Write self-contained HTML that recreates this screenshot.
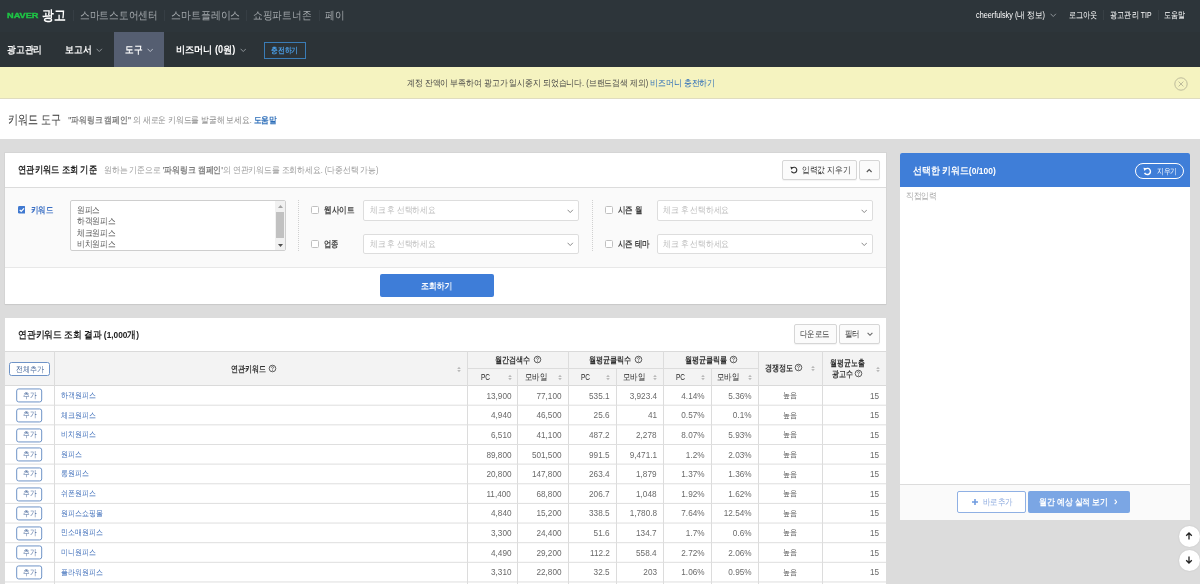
<!DOCTYPE html><html lang="ko"><head><meta charset="utf-8"><title>키워드 도구</title><style>
*{box-sizing:border-box;margin:0;padding:0}
html,body{width:1200px;height:584px;overflow:hidden}
body{position:relative;background:#dcdcdc;font-family:"Liberation Sans",sans-serif;font-size:9px;color:#333}
.a{position:absolute}
.t{position:absolute;white-space:nowrap;line-height:14px;height:14px}
b,.b{font-weight:bold}
.btn{position:absolute;border:1px solid #d6d6d6;background:#fbfbfb;border-radius:2px;box-shadow:0 1px 1px rgba(0,0,0,.05)}
.sel{position:absolute;border:1px solid #ddd;background:#fff;border-radius:2px;height:20px}
.cb{position:absolute;width:8px;height:8px;border:1px solid #c0c0c0;background:#fff;border-radius:1.5px}
.vl{position:absolute;width:1px;background:#dcdcdc}
.hl{position:absolute;height:1px;background:#dcdcdc}
.add{position:absolute;left:16px;width:26px;height:14px;transform:translate(0.2px,0.45px);border:1px solid #6e93c7;border-radius:2.5px;background:#fff}
.si{position:absolute;width:4px;height:7px}
</style></head><body><div id="root" style="position:absolute;left:0;top:0;width:1200px;height:584px;will-change:transform;filter:blur(0.35px)">
<div class="a" style="left:-8px;top:-8px;width:1216px;height:40px;background:#2d353a"></div>
<div class="a" style="left:-8px;top:32px;width:1216px;height:35px;background:#2c3337"></div>
<div class="a" style="left:113.5px;top:32px;width:50.5px;height:35px;background:#555e71"></div>
<div class="t" style="top:9.40px;font-size:8px;color:#1ec545;font-weight:bold;left:6.50px;transform-origin:0 50%;transform:scaleX(1.149);font-weight:bold;-webkit-text-stroke:0.4px #1ec545;">NAVER</div>
<div class="t" style="top:8.60px;font-size:13.5px;color:#fff;font-weight:bold;left:42.00px;transform-origin:0 50%;transform:scaleX(0.843);">광고</div>
<div class="vl" style="left:72.8px;top:10px;height:11px;background:#363e44"></div>
<div class="vl" style="left:164.3px;top:10px;height:11px;background:#363e44"></div>
<div class="vl" style="left:245.5px;top:10px;height:11px;background:#363e44"></div>
<div class="vl" style="left:319.0px;top:10px;height:11px;background:#363e44"></div>
<div class="t" style="top:8.00px;font-size:10.5px;color:#a4a9ad;left:79.60px;transform-origin:0 50%;transform:scaleX(0.882);">스마트스토어센터</div>
<div class="t" style="top:8.00px;font-size:10.5px;color:#a4a9ad;left:170.50px;transform-origin:0 50%;transform:scaleX(0.901);">스마트플레이스</div>
<div class="t" style="top:8.00px;font-size:10.5px;color:#a4a9ad;left:252.70px;transform-origin:0 50%;transform:scaleX(0.883);">쇼핑파트너존</div>
<div class="t" style="top:8.00px;font-size:10.5px;color:#a4a9ad;left:325.00px;transform-origin:0 50%;transform:scaleX(0.877);">페이</div>
<div class="t" style="top:8.00px;font-size:8.5px;color:#fff;left:976.00px;transform-origin:0 50%;transform:scaleX(0.858);">cheerfulsky (내 정보)</div>
<svg class="a" style="left:1050.25px;top:13.4125px" width="6.5" height="4.575" viewBox="0 0 6.5 4.575"><path d="M0.6 0.8 L3.25 3.575 L5.9 0.8" fill="none" stroke="#8d9397" stroke-width="1"/></svg>
<div class="t" style="top:8.00px;font-size:8.5px;color:#fff;left:1069.00px;transform-origin:0 50%;transform:scaleX(0.792);">로그아웃</div>
<div class="vl" style="left:1103.0px;top:10px;height:10px;background:#384045"></div>
<div class="vl" style="left:1157.5px;top:10px;height:10px;background:#384045"></div>
<div class="t" style="top:8.00px;font-size:8.5px;color:#fff;left:1110.00px;transform-origin:0 50%;transform:scaleX(0.804);">광고관리 TIP</div>
<div class="t" style="top:8.00px;font-size:8.5px;color:#fff;left:1164.00px;transform-origin:0 50%;transform:scaleX(0.778);">도움말</div>
<div class="t" style="top:43.00px;font-size:10px;color:#fff;font-weight:bold;left:6.50px;transform-origin:0 50%;transform:scaleX(0.875);">광고관리</div>
<div class="t" style="top:43.00px;font-size:10px;color:#fff;font-weight:bold;left:64.70px;transform-origin:0 50%;transform:scaleX(0.887);">보고서</div>
<svg class="a" style="left:96.05px;top:48.4125px" width="6.5" height="4.575" viewBox="0 0 6.5 4.575"><path d="M0.6 0.8 L3.25 3.575 L5.9 0.8" fill="none" stroke="#8d9397" stroke-width="1"/></svg>
<div class="t" style="top:43.00px;font-size:10px;color:#fff;font-weight:bold;left:124.70px;transform-origin:0 50%;transform:scaleX(0.865);">도구</div>
<svg class="a" style="left:146.75px;top:48.4125px" width="6.5" height="4.575" viewBox="0 0 6.5 4.575"><path d="M0.6 0.8 L3.25 3.575 L5.9 0.8" fill="none" stroke="#b9bfc9" stroke-width="1"/></svg>
<div class="t" style="top:43.00px;font-size:10px;color:#fff;font-weight:bold;left:175.70px;transform-origin:0 50%;transform:scaleX(0.912);">비즈머니 (0원)</div>
<svg class="a" style="left:239.75px;top:48.4125px" width="6.5" height="4.575" viewBox="0 0 6.5 4.575"><path d="M0.6 0.8 L3.25 3.575 L5.9 0.8" fill="none" stroke="#8d9397" stroke-width="1"/></svg>
<div class="a" style="left:264px;top:42px;width:42px;height:17px;border:1px solid #3a7cb6"></div>
<div class="t" style="top:43.50px;font-size:8px;color:#4a9be0;font-weight:bold;left:271.20px;transform-origin:0 50%;transform:scaleX(0.844);">충전하기</div>
<div class="a" style="left:-8px;top:67px;width:1216px;height:32px;background:#f5f3c0;border-bottom:1px solid #dfdcc0"></div>
<div class="t" style="top:76.00px;font-size:8.5px;color:#444;left:407.00px;transform-origin:0 50%;transform:scaleX(0.872);">계정 잔액이 부족하여 광고가 일시중지 되었습니다. (브랜드검색 제외) <span style="color:#2a6cb8">비즈머니 충전하기</span></div>
<svg class="a" style="left:1174px;top:76.5px" width="14" height="14" viewBox="0 0 14 14"><circle cx="7" cy="7" r="6.2" fill="none" stroke="#bdbb9b" stroke-width="1"/><path d="M4.6 4.6 L9.4 9.4 M9.4 4.6 L4.6 9.4" stroke="#bdbb9b" stroke-width="1"/></svg>
<div class="a" style="left:-8px;top:99px;width:1216px;height:40px;background:#fff"></div>
<div class="t" style="top:112.50px;font-size:13px;color:#333;left:8.00px;transform-origin:0 50%;transform:scaleX(0.772);">키워드 도구</div>
<div class="t" style="top:113.00px;font-size:8.5px;color:#888;left:68.00px;transform-origin:0 50%;transform:scaleX(0.860);"><b style="color:#7a7a7a">"파워링크 캠페인"</b> 의 새로운 키워드를 발굴해 보세요. <b style="color:#2a6cb8">도움말</b></div>
<div class="a" style="left:5px;top:153px;width:881px;height:151px;background:#fff;box-shadow:0 0 0 1px rgba(0,0,0,.03),0 1px 1px rgba(0,0,0,.05)"></div>
<div class="a" style="left:5px;top:187px;width:881px;height:81px;background:#fafafa;border-top:1px solid #dcdcdc;border-bottom:1px solid #e8e8e8"></div>
<div class="t" style="top:163.00px;font-size:9.5px;color:#222;font-weight:bold;left:18.00px;transform-origin:0 50%;transform:scaleX(0.829);">연관키워드 조회 기준</div>
<div class="t" style="top:163.00px;font-size:8.5px;color:#999;left:104.30px;transform-origin:0 50%;transform:scaleX(0.867);">원하는 기준으로 <b style="color:#7a7a7a">'파워링크 캠페인'</b>의 연관키워드를 조회하세요. (다중선택 가능)</div>
<div class="btn" style="left:782px;top:160px;width:75px;height:20px"></div>
<svg class="a" style="left:789.7px;top:165.6px" width="8.2" height="8.2" viewBox="0 0 9 9"><path d="M2.6 1.9 A3.1 3.1 0 1 1 1.6 5.9" fill="none" stroke="#333" stroke-width="1.25"/><path d="M0.4 0.8 L3.9 1.3 L1.5 4.0 Z" fill="#333"/></svg>
<div class="t" style="top:163.00px;font-size:8.5px;color:#333;left:802.00px;transform-origin:0 50%;transform:scaleX(0.860);">입력값 지우기</div>
<div class="btn" style="left:859px;top:160px;width:21px;height:20px"></div>
<svg class="a" style="left:866.3px;top:167.7px" width="6.4" height="5" viewBox="0 0 6.4 5"><path d="M0.8 4.0 L3.2 1.5 L5.6 4.0" fill="none" stroke="#555" stroke-width="1.15"/></svg>
<svg class="a" style="left:17.7px;top:206.3px" width="7.6" height="7.6" viewBox="0 0 8.5 8.5"><rect width="8.5" height="8.5" rx="1.6" fill="#3f78d0"/><path d="M1.9 4.3 L3.6 6 L6.7 2.6" fill="none" stroke="#fff" stroke-width="1.4"/></svg>
<div class="t" style="top:203.00px;font-size:9px;color:#3a6fc4;font-weight:bold;left:30.50px;transform-origin:0 50%;transform:scaleX(0.833);">키워드</div>
<div class="a" style="left:69.5px;top:200px;width:216px;height:51px;background:#fff;border:1px solid #cecece;border-radius:2px"></div>
<div class="t" style="top:202.70px;font-size:8.8px;color:#555;left:77.00px;transform-origin:0 50%;transform:scaleX(0.852);">원피스</div>
<div class="t" style="top:214.10px;font-size:8.8px;color:#555;left:77.00px;transform-origin:0 50%;transform:scaleX(0.856);">하객원피스</div>
<div class="t" style="top:225.50px;font-size:8.8px;color:#555;left:77.00px;transform-origin:0 50%;transform:scaleX(0.856);">체크원피스</div>
<div class="t" style="top:236.90px;font-size:8.8px;color:#555;left:77.00px;transform-origin:0 50%;transform:scaleX(0.856);">비치원피스</div>
<div class="a" style="left:275px;top:201px;width:10px;height:49px;background:#f1f1f1"></div>
<div class="a" style="left:276px;top:212px;width:8px;height:25.5px;background:#c1c1c1"></div>
<svg class="a" style="left:277.5px;top:205px" width="5" height="3" viewBox="0 0 5 3"><path d="M0 3 L2.5 0 L5 3 Z" fill="#a3a3a3"/></svg>
<svg class="a" style="left:277.5px;top:243.5px" width="5" height="3" viewBox="0 0 5 3"><path d="M0 0 L2.5 3 L5 0 Z" fill="#505050"/></svg>
<div class="a" style="left:297.5px;top:200px;width:0;height:51px;border-left:1px dotted #d0d0d0"></div>
<div class="a" style="left:592px;top:200px;width:0;height:51px;border-left:1px dotted #d0d0d0"></div>
<div class="cb" style="left:311px;top:206px"></div>
<div class="t" style="top:202.80px;font-size:8.8px;color:#444;font-weight:bold;left:324.00px;transform-origin:0 50%;transform:scaleX(0.847);">웹사이트</div>
<div class="sel" style="left:363px;top:200px;width:216px;height:21px"></div>
<div class="t" style="top:203.40px;font-size:8.5px;color:#bdbdbd;left:369.50px;transform-origin:0 50%;transform:scaleX(0.854);">체크 후 선택하세요</div>
<svg class="a" style="left:567.45px;top:208.5125px" width="6.5" height="4.575" viewBox="0 0 6.5 4.575"><path d="M0.6 0.8 L3.25 3.575 L5.9 0.8" fill="none" stroke="#858585" stroke-width="0.95"/></svg>
<div class="cb" style="left:311px;top:239.5px"></div>
<div class="t" style="top:236.50px;font-size:8.8px;color:#444;font-weight:bold;left:324.00px;transform-origin:0 50%;transform:scaleX(0.819);">업종</div>
<div class="sel" style="left:363px;top:234px;width:216px;height:20px"></div>
<div class="t" style="top:236.90px;font-size:8.5px;color:#bdbdbd;left:369.50px;transform-origin:0 50%;transform:scaleX(0.854);">체크 후 선택하세요</div>
<svg class="a" style="left:567.45px;top:242.0125px" width="6.5" height="4.575" viewBox="0 0 6.5 4.575"><path d="M0.6 0.8 L3.25 3.575 L5.9 0.8" fill="none" stroke="#858585" stroke-width="0.95"/></svg>
<div class="cb" style="left:605px;top:206px"></div>
<div class="t" style="top:202.80px;font-size:8.8px;color:#444;font-weight:bold;left:618.00px;transform-origin:0 50%;transform:scaleX(0.832);">시즌 월</div>
<div class="sel" style="left:657px;top:200px;width:215.5px;height:21px"></div>
<div class="t" style="top:203.40px;font-size:8.5px;color:#bdbdbd;left:662.50px;transform-origin:0 50%;transform:scaleX(0.860);">체크 후 선택하세요</div>
<svg class="a" style="left:860.95px;top:208.5125px" width="6.5" height="4.575" viewBox="0 0 6.5 4.575"><path d="M0.6 0.8 L3.25 3.575 L5.9 0.8" fill="none" stroke="#858585" stroke-width="0.95"/></svg>
<div class="cb" style="left:605px;top:239.5px"></div>
<div class="t" style="top:236.50px;font-size:8.8px;color:#444;font-weight:bold;left:618.00px;transform-origin:0 50%;transform:scaleX(0.832);">시즌 테마</div>
<div class="sel" style="left:657px;top:234px;width:215.5px;height:20px"></div>
<div class="t" style="top:236.90px;font-size:8.5px;color:#bdbdbd;left:662.50px;transform-origin:0 50%;transform:scaleX(0.860);">체크 후 선택하세요</div>
<svg class="a" style="left:860.95px;top:242.0125px" width="6.5" height="4.575" viewBox="0 0 6.5 4.575"><path d="M0.6 0.8 L3.25 3.575 L5.9 0.8" fill="none" stroke="#858585" stroke-width="0.95"/></svg>
<div class="a" style="left:379.5px;top:274px;width:114px;height:23px;background:#3e7dd8;border-radius:2px"></div>
<div class="t" style="top:278.70px;font-size:8.8px;color:#fff;font-weight:bold;left:420.75px;transform-origin:0 50%;transform:scaleX(0.868);">조회하기</div>
<div class="a" style="left:5px;top:317.5px;width:881px;height:270px;background:#fff"></div>
<div class="t" style="top:327.50px;font-size:9.5px;color:#222;font-weight:bold;left:18.00px;transform-origin:0 50%;transform:scaleX(0.877);">연관키워드 조회 결과 (1,000개)</div>
<div class="btn" style="left:794px;top:324px;width:42.5px;height:20px"></div>
<div class="t" style="top:327.00px;font-size:8.5px;color:#333;left:800.00px;transform-origin:0 50%;transform:scaleX(0.833);">다운로드</div>
<div class="btn" style="left:839px;top:324px;width:40.5px;height:20px"></div>
<div class="t" style="top:327.00px;font-size:8.5px;color:#333;left:844.50px;transform-origin:0 50%;transform:scaleX(0.833);">필터</div>
<svg class="a" style="left:866.5px;top:332.35px" width="6" height="4.300000000000001" viewBox="0 0 6 4.300000000000001"><path d="M0.6 0.8 L3.0 3.3000000000000003 L5.4 0.8" fill="none" stroke="#666" stroke-width="1.1"/></svg>
<div class="a" style="left:5px;top:351px;width:881px;height:35px;background:#f3f3f3;border-top:1px solid #dadada;border-bottom:1px solid #dadada"></div>
<div class="vl" style="left:54px;top:351px;height:240px"></div>
<div class="vl" style="left:467px;top:351px;height:240px"></div>
<div class="vl" style="left:517px;top:368px;height:240px"></div>
<div class="vl" style="left:568px;top:351px;height:240px"></div>
<div class="vl" style="left:616px;top:368px;height:240px"></div>
<div class="vl" style="left:663px;top:351px;height:240px"></div>
<div class="vl" style="left:711px;top:368px;height:240px"></div>
<div class="vl" style="left:758px;top:351px;height:240px"></div>
<div class="vl" style="left:822px;top:351px;height:240px"></div>
<div class="hl" style="left:467px;top:368px;width:291px"></div>
<div class="a" style="left:9px;top:362px;width:41px;height:14px;border:1px solid #6e93c7;border-radius:2.5px;background:#fff"></div>
<div class="t" style="top:362.80px;font-size:8.2px;color:#4c6c9e;left:15.50px;transform-origin:0 50%;transform:scaleX(0.875);">전체추가</div>
<div class="t" style="top:361.70px;font-size:8.5px;color:#333;font-weight:bold;left:230.50px;transform-origin:0 50%;transform:scaleX(0.778);">연관키워드</div>
<svg class="a" style="left:268.0px;top:363.8px" width="9" height="9" viewBox="0 0 9 9"><circle cx="4.5" cy="4.5" r="3.3" fill="none" stroke="#444" stroke-width="0.85"/><path d="M3.4 3.7 Q3.4 2.6 4.5 2.6 Q5.6 2.6 5.6 3.5 Q5.6 4.1 4.5 4.7 V5.3" fill="none" stroke="#444" stroke-width="0.75"/><rect x="4.1" y="5.9" width="0.8" height="0.8" fill="#444"/></svg>
<svg class="si" style="left:456.8px;top:365.5px" viewBox="0 0 4 7"><path d="M2 0.7 L3.8 2.9 H0.2 Z M2 6.3 L3.8 4.1 H0.2 Z" fill="#b9b9b9"/></svg>
<div class="t" style="top:353.30px;font-size:8.5px;color:#333;font-weight:bold;left:494.50px;transform-origin:0 50%;transform:scaleX(0.789);">월간검색수</div>
<svg class="a" style="left:532.6px;top:355.1px" width="9" height="9" viewBox="0 0 9 9"><circle cx="4.5" cy="4.5" r="3.3" fill="none" stroke="#444" stroke-width="0.85"/><path d="M3.4 3.7 Q3.4 2.6 4.5 2.6 Q5.6 2.6 5.6 3.5 Q5.6 4.1 4.5 4.7 V5.3" fill="none" stroke="#444" stroke-width="0.75"/><rect x="4.1" y="5.9" width="0.8" height="0.8" fill="#444"/></svg>
<div class="t" style="top:353.30px;font-size:8.5px;color:#333;font-weight:bold;left:589.00px;transform-origin:0 50%;transform:scaleX(0.787);">월평균클릭수</div>
<svg class="a" style="left:634.0px;top:355.1px" width="9" height="9" viewBox="0 0 9 9"><circle cx="4.5" cy="4.5" r="3.3" fill="none" stroke="#444" stroke-width="0.85"/><path d="M3.4 3.7 Q3.4 2.6 4.5 2.6 Q5.6 2.6 5.6 3.5 Q5.6 4.1 4.5 4.7 V5.3" fill="none" stroke="#444" stroke-width="0.75"/><rect x="4.1" y="5.9" width="0.8" height="0.8" fill="#444"/></svg>
<div class="t" style="top:353.30px;font-size:8.5px;color:#333;font-weight:bold;left:684.50px;transform-origin:0 50%;transform:scaleX(0.787);">월평균클릭률</div>
<svg class="a" style="left:729.0px;top:355.1px" width="9" height="9" viewBox="0 0 9 9"><circle cx="4.5" cy="4.5" r="3.3" fill="none" stroke="#444" stroke-width="0.85"/><path d="M3.4 3.7 Q3.4 2.6 4.5 2.6 Q5.6 2.6 5.6 3.5 Q5.6 4.1 4.5 4.7 V5.3" fill="none" stroke="#444" stroke-width="0.75"/><rect x="4.1" y="5.9" width="0.8" height="0.8" fill="#444"/></svg>
<div class="t" style="top:370.30px;font-size:8.8px;color:#222;left:481.20px;transform-origin:0 50%;transform:scaleX(0.736);">PC</div>
<svg class="si" style="left:507.5px;top:374.2px" viewBox="0 0 4 7"><path d="M2 0.7 L3.8 2.9 H0.2 Z M2 6.3 L3.8 4.1 H0.2 Z" fill="#b9b9b9"/></svg>
<div class="t" style="top:370.30px;font-size:8.5px;color:#222;left:525.00px;transform-origin:0 50%;transform:scaleX(0.833);">모바일</div>
<svg class="si" style="left:558.2px;top:374.2px" viewBox="0 0 4 7"><path d="M2 0.7 L3.8 2.9 H0.2 Z M2 6.3 L3.8 4.1 H0.2 Z" fill="#b9b9b9"/></svg>
<div class="t" style="top:370.30px;font-size:8.8px;color:#222;left:580.50px;transform-origin:0 50%;transform:scaleX(0.736);">PC</div>
<svg class="si" style="left:605.5px;top:374.2px" viewBox="0 0 4 7"><path d="M2 0.7 L3.8 2.9 H0.2 Z M2 6.3 L3.8 4.1 H0.2 Z" fill="#b9b9b9"/></svg>
<div class="t" style="top:370.30px;font-size:8.5px;color:#222;left:622.50px;transform-origin:0 50%;transform:scaleX(0.833);">모바일</div>
<svg class="si" style="left:653px;top:374.2px" viewBox="0 0 4 7"><path d="M2 0.7 L3.8 2.9 H0.2 Z M2 6.3 L3.8 4.1 H0.2 Z" fill="#b9b9b9"/></svg>
<div class="t" style="top:370.30px;font-size:8.8px;color:#222;left:675.50px;transform-origin:0 50%;transform:scaleX(0.736);">PC</div>
<svg class="si" style="left:700.5px;top:374.2px" viewBox="0 0 4 7"><path d="M2 0.7 L3.8 2.9 H0.2 Z M2 6.3 L3.8 4.1 H0.2 Z" fill="#b9b9b9"/></svg>
<div class="t" style="top:370.30px;font-size:8.5px;color:#222;left:717.00px;transform-origin:0 50%;transform:scaleX(0.833);">모바일</div>
<svg class="si" style="left:748px;top:374.2px" viewBox="0 0 4 7"><path d="M2 0.7 L3.8 2.9 H0.2 Z M2 6.3 L3.8 4.1 H0.2 Z" fill="#b9b9b9"/></svg>
<div class="t" style="top:361.30px;font-size:8.5px;color:#333;font-weight:bold;left:764.50px;transform-origin:0 50%;transform:scaleX(0.792);">경쟁정도</div>
<svg class="a" style="left:794.0px;top:363.0px" width="9" height="9" viewBox="0 0 9 9"><circle cx="4.5" cy="4.5" r="3.3" fill="none" stroke="#444" stroke-width="0.85"/><path d="M3.4 3.7 Q3.4 2.6 4.5 2.6 Q5.6 2.6 5.6 3.5 Q5.6 4.1 4.5 4.7 V5.3" fill="none" stroke="#444" stroke-width="0.75"/><rect x="4.1" y="5.9" width="0.8" height="0.8" fill="#444"/></svg>
<svg class="si" style="left:811.3px;top:365.0px" viewBox="0 0 4 7"><path d="M2 0.7 L3.8 2.9 H0.2 Z M2 6.3 L3.8 4.1 H0.2 Z" fill="#b9b9b9"/></svg>
<div class="t" style="top:355.80px;font-size:8.5px;color:#333;font-weight:bold;left:830.00px;transform-origin:0 50%;transform:scaleX(0.767);">월평균노출</div>
<div class="t" style="top:367.30px;font-size:8.5px;color:#333;font-weight:bold;left:831.50px;transform-origin:0 50%;transform:scaleX(0.778);">광고수</div>
<svg class="a" style="left:854.0px;top:369.3px" width="9" height="9" viewBox="0 0 9 9"><circle cx="4.5" cy="4.5" r="3.3" fill="none" stroke="#444" stroke-width="0.85"/><path d="M3.4 3.7 Q3.4 2.6 4.5 2.6 Q5.6 2.6 5.6 3.5 Q5.6 4.1 4.5 4.7 V5.3" fill="none" stroke="#444" stroke-width="0.75"/><rect x="4.1" y="5.9" width="0.8" height="0.8" fill="#444"/></svg>
<svg class="si" style="left:875.5px;top:365.5px" viewBox="0 0 4 7"><path d="M2 0.7 L3.8 2.9 H0.2 Z M2 6.3 L3.8 4.1 H0.2 Z" fill="#b9b9b9"/></svg>
<div class="hl" style="left:5px;top:404px;width:881px;background:rgba(222,222,222,0.30)"></div><div class="hl" style="left:5px;top:405px;width:881px;background:rgba(222,222,222,0.70)"></div>
<div class="add" style="top:388px"></div>
<div class="t" style="top:388.78px;font-size:8.2px;color:#4c6c9e;left:22.50px;transform-origin:0 50%;transform:scaleX(0.828);">추가</div>
<div class="t" style="top:387.88px;font-size:8.3px;color:#4674bd;left:60.75px;transform-origin:0 50%;transform:scaleX(0.869);">하객원피스</div>
<div class="t" style="top:388.58px;font-size:9px;color:#6a6a6a;right:688.70px;transform-origin:100% 50%;transform:scaleX(0.910);">13,900</div>
<div class="t" style="top:388.58px;font-size:9px;color:#6a6a6a;right:638.00px;transform-origin:100% 50%;transform:scaleX(0.910);">77,100</div>
<div class="t" style="top:388.58px;font-size:9px;color:#6a6a6a;right:590.30px;transform-origin:100% 50%;transform:scaleX(0.910);">535.1</div>
<div class="t" style="top:388.58px;font-size:9px;color:#6a6a6a;right:543.30px;transform-origin:100% 50%;transform:scaleX(0.910);">3,923.4</div>
<div class="t" style="top:388.58px;font-size:9px;color:#6a6a6a;right:495.30px;transform-origin:100% 50%;transform:scaleX(0.910);">4.14%</div>
<div class="t" style="top:388.58px;font-size:9px;color:#6a6a6a;right:448.30px;transform-origin:100% 50%;transform:scaleX(0.910);">5.36%</div>
<div class="t" style="top:387.98px;font-size:8.3px;color:#555;left:640.00px;width:300px;text-align:center;transform-origin:50% 50%;transform:scaleX(0.875);">높음</div>
<div class="t" style="top:388.58px;font-size:9px;color:#6a6a6a;right:320.50px;transform-origin:100% 50%;transform:scaleX(0.910);">15</div>
<div class="hl" style="left:5px;top:424px;width:881px;background:rgba(222,222,222,0.66)"></div><div class="hl" style="left:5px;top:425px;width:881px;background:rgba(222,222,222,0.34)"></div>
<div class="add" style="top:408px"></div>
<div class="t" style="top:408.42px;font-size:8.2px;color:#4c6c9e;left:22.50px;transform-origin:0 50%;transform:scaleX(0.828);">추가</div>
<div class="t" style="top:407.52px;font-size:8.3px;color:#4674bd;left:60.75px;transform-origin:0 50%;transform:scaleX(0.869);">체크원피스</div>
<div class="t" style="top:408.22px;font-size:9px;color:#6a6a6a;right:688.70px;transform-origin:100% 50%;transform:scaleX(0.910);">4,940</div>
<div class="t" style="top:408.22px;font-size:9px;color:#6a6a6a;right:638.00px;transform-origin:100% 50%;transform:scaleX(0.910);">46,500</div>
<div class="t" style="top:408.22px;font-size:9px;color:#6a6a6a;right:590.30px;transform-origin:100% 50%;transform:scaleX(0.910);">25.6</div>
<div class="t" style="top:408.22px;font-size:9px;color:#6a6a6a;right:543.30px;transform-origin:100% 50%;transform:scaleX(0.910);">41</div>
<div class="t" style="top:408.22px;font-size:9px;color:#6a6a6a;right:495.30px;transform-origin:100% 50%;transform:scaleX(0.910);">0.57%</div>
<div class="t" style="top:408.22px;font-size:9px;color:#6a6a6a;right:448.30px;transform-origin:100% 50%;transform:scaleX(0.910);">0.1%</div>
<div class="t" style="top:407.62px;font-size:8.3px;color:#555;left:640.00px;width:300px;text-align:center;transform-origin:50% 50%;transform:scaleX(0.875);">높음</div>
<div class="t" style="top:408.22px;font-size:9px;color:#6a6a6a;right:320.50px;transform-origin:100% 50%;transform:scaleX(0.910);">15</div>
<div class="hl" style="left:5px;top:444px;width:881px;background:rgba(222,222,222,0.98)"></div>
<div class="add" style="top:428px"></div>
<div class="t" style="top:428.06px;font-size:8.2px;color:#4c6c9e;left:22.50px;transform-origin:0 50%;transform:scaleX(0.828);">추가</div>
<div class="t" style="top:427.16px;font-size:8.3px;color:#4674bd;left:60.75px;transform-origin:0 50%;transform:scaleX(0.869);">비치원피스</div>
<div class="t" style="top:427.86px;font-size:9px;color:#6a6a6a;right:688.70px;transform-origin:100% 50%;transform:scaleX(0.910);">6,510</div>
<div class="t" style="top:427.86px;font-size:9px;color:#6a6a6a;right:638.00px;transform-origin:100% 50%;transform:scaleX(0.910);">41,100</div>
<div class="t" style="top:427.86px;font-size:9px;color:#6a6a6a;right:590.30px;transform-origin:100% 50%;transform:scaleX(0.910);">487.2</div>
<div class="t" style="top:427.86px;font-size:9px;color:#6a6a6a;right:543.30px;transform-origin:100% 50%;transform:scaleX(0.910);">2,278</div>
<div class="t" style="top:427.86px;font-size:9px;color:#6a6a6a;right:495.30px;transform-origin:100% 50%;transform:scaleX(0.910);">8.07%</div>
<div class="t" style="top:427.86px;font-size:9px;color:#6a6a6a;right:448.30px;transform-origin:100% 50%;transform:scaleX(0.910);">5.93%</div>
<div class="t" style="top:427.26px;font-size:8.3px;color:#555;left:640.00px;width:300px;text-align:center;transform-origin:50% 50%;transform:scaleX(0.875);">높음</div>
<div class="t" style="top:427.86px;font-size:9px;color:#6a6a6a;right:320.50px;transform-origin:100% 50%;transform:scaleX(0.910);">15</div>
<div class="hl" style="left:5px;top:463px;width:881px;background:rgba(222,222,222,0.38)"></div><div class="hl" style="left:5px;top:464px;width:881px;background:rgba(222,222,222,0.62)"></div>
<div class="add" style="top:447px"></div>
<div class="t" style="top:447.70px;font-size:8.2px;color:#4c6c9e;left:22.50px;transform-origin:0 50%;transform:scaleX(0.828);">추가</div>
<div class="t" style="top:446.80px;font-size:8.3px;color:#4674bd;left:60.75px;transform-origin:0 50%;transform:scaleX(0.869);">원피스</div>
<div class="t" style="top:447.50px;font-size:9px;color:#6a6a6a;right:688.70px;transform-origin:100% 50%;transform:scaleX(0.910);">89,800</div>
<div class="t" style="top:447.50px;font-size:9px;color:#6a6a6a;right:638.00px;transform-origin:100% 50%;transform:scaleX(0.910);">501,500</div>
<div class="t" style="top:447.50px;font-size:9px;color:#6a6a6a;right:590.30px;transform-origin:100% 50%;transform:scaleX(0.910);">991.5</div>
<div class="t" style="top:447.50px;font-size:9px;color:#6a6a6a;right:543.30px;transform-origin:100% 50%;transform:scaleX(0.910);">9,471.1</div>
<div class="t" style="top:447.50px;font-size:9px;color:#6a6a6a;right:495.30px;transform-origin:100% 50%;transform:scaleX(0.910);">1.2%</div>
<div class="t" style="top:447.50px;font-size:9px;color:#6a6a6a;right:448.30px;transform-origin:100% 50%;transform:scaleX(0.910);">2.03%</div>
<div class="t" style="top:446.90px;font-size:8.3px;color:#555;left:640.00px;width:300px;text-align:center;transform-origin:50% 50%;transform:scaleX(0.875);">높음</div>
<div class="t" style="top:447.50px;font-size:9px;color:#6a6a6a;right:320.50px;transform-origin:100% 50%;transform:scaleX(0.910);">15</div>
<div class="hl" style="left:5px;top:483px;width:881px;background:rgba(222,222,222,0.74)"></div><div class="hl" style="left:5px;top:484px;width:881px;background:rgba(222,222,222,0.26)"></div>
<div class="add" style="top:467px"></div>
<div class="t" style="top:467.34px;font-size:8.2px;color:#4c6c9e;left:22.50px;transform-origin:0 50%;transform:scaleX(0.828);">추가</div>
<div class="t" style="top:466.44px;font-size:8.3px;color:#4674bd;left:60.75px;transform-origin:0 50%;transform:scaleX(0.869);">롱원피스</div>
<div class="t" style="top:467.14px;font-size:9px;color:#6a6a6a;right:688.70px;transform-origin:100% 50%;transform:scaleX(0.910);">20,800</div>
<div class="t" style="top:467.14px;font-size:9px;color:#6a6a6a;right:638.00px;transform-origin:100% 50%;transform:scaleX(0.910);">147,800</div>
<div class="t" style="top:467.14px;font-size:9px;color:#6a6a6a;right:590.30px;transform-origin:100% 50%;transform:scaleX(0.910);">263.4</div>
<div class="t" style="top:467.14px;font-size:9px;color:#6a6a6a;right:543.30px;transform-origin:100% 50%;transform:scaleX(0.910);">1,879</div>
<div class="t" style="top:467.14px;font-size:9px;color:#6a6a6a;right:495.30px;transform-origin:100% 50%;transform:scaleX(0.910);">1.37%</div>
<div class="t" style="top:467.14px;font-size:9px;color:#6a6a6a;right:448.30px;transform-origin:100% 50%;transform:scaleX(0.910);">1.36%</div>
<div class="t" style="top:466.54px;font-size:8.3px;color:#555;left:640.00px;width:300px;text-align:center;transform-origin:50% 50%;transform:scaleX(0.875);">높음</div>
<div class="t" style="top:467.14px;font-size:9px;color:#6a6a6a;right:320.50px;transform-origin:100% 50%;transform:scaleX(0.910);">15</div>
<div class="hl" style="left:5px;top:502px;width:881px;background:rgba(222,222,222,0.10)"></div><div class="hl" style="left:5px;top:503px;width:881px;background:rgba(222,222,222,0.90)"></div>
<div class="add" style="top:487px"></div>
<div class="t" style="top:486.98px;font-size:8.2px;color:#4c6c9e;left:22.50px;transform-origin:0 50%;transform:scaleX(0.828);">추가</div>
<div class="t" style="top:486.08px;font-size:8.3px;color:#4674bd;left:60.75px;transform-origin:0 50%;transform:scaleX(0.869);">쉬폰원피스</div>
<div class="t" style="top:486.78px;font-size:9px;color:#6a6a6a;right:688.70px;transform-origin:100% 50%;transform:scaleX(0.910);">11,400</div>
<div class="t" style="top:486.78px;font-size:9px;color:#6a6a6a;right:638.00px;transform-origin:100% 50%;transform:scaleX(0.910);">68,800</div>
<div class="t" style="top:486.78px;font-size:9px;color:#6a6a6a;right:590.30px;transform-origin:100% 50%;transform:scaleX(0.910);">206.7</div>
<div class="t" style="top:486.78px;font-size:9px;color:#6a6a6a;right:543.30px;transform-origin:100% 50%;transform:scaleX(0.910);">1,048</div>
<div class="t" style="top:486.78px;font-size:9px;color:#6a6a6a;right:495.30px;transform-origin:100% 50%;transform:scaleX(0.910);">1.92%</div>
<div class="t" style="top:486.78px;font-size:9px;color:#6a6a6a;right:448.30px;transform-origin:100% 50%;transform:scaleX(0.910);">1.62%</div>
<div class="t" style="top:486.18px;font-size:8.3px;color:#555;left:640.00px;width:300px;text-align:center;transform-origin:50% 50%;transform:scaleX(0.875);">높음</div>
<div class="t" style="top:486.78px;font-size:9px;color:#6a6a6a;right:320.50px;transform-origin:100% 50%;transform:scaleX(0.910);">15</div>
<div class="hl" style="left:5px;top:522px;width:881px;background:rgba(222,222,222,0.46)"></div><div class="hl" style="left:5px;top:523px;width:881px;background:rgba(222,222,222,0.54)"></div>
<div class="add" style="top:506px"></div>
<div class="t" style="top:506.62px;font-size:8.2px;color:#4c6c9e;left:22.50px;transform-origin:0 50%;transform:scaleX(0.828);">추가</div>
<div class="t" style="top:505.72px;font-size:8.3px;color:#4674bd;left:60.75px;transform-origin:0 50%;transform:scaleX(0.869);">원피스쇼핑몰</div>
<div class="t" style="top:506.42px;font-size:9px;color:#6a6a6a;right:688.70px;transform-origin:100% 50%;transform:scaleX(0.910);">4,840</div>
<div class="t" style="top:506.42px;font-size:9px;color:#6a6a6a;right:638.00px;transform-origin:100% 50%;transform:scaleX(0.910);">15,200</div>
<div class="t" style="top:506.42px;font-size:9px;color:#6a6a6a;right:590.30px;transform-origin:100% 50%;transform:scaleX(0.910);">338.5</div>
<div class="t" style="top:506.42px;font-size:9px;color:#6a6a6a;right:543.30px;transform-origin:100% 50%;transform:scaleX(0.910);">1,780.8</div>
<div class="t" style="top:506.42px;font-size:9px;color:#6a6a6a;right:495.30px;transform-origin:100% 50%;transform:scaleX(0.910);">7.64%</div>
<div class="t" style="top:506.42px;font-size:9px;color:#6a6a6a;right:448.30px;transform-origin:100% 50%;transform:scaleX(0.910);">12.54%</div>
<div class="t" style="top:505.82px;font-size:8.3px;color:#555;left:640.00px;width:300px;text-align:center;transform-origin:50% 50%;transform:scaleX(0.875);">높음</div>
<div class="t" style="top:506.42px;font-size:9px;color:#6a6a6a;right:320.50px;transform-origin:100% 50%;transform:scaleX(0.910);">15</div>
<div class="hl" style="left:5px;top:542px;width:881px;background:rgba(222,222,222,0.82)"></div><div class="hl" style="left:5px;top:543px;width:881px;background:rgba(222,222,222,0.18)"></div>
<div class="add" style="top:526px"></div>
<div class="t" style="top:526.26px;font-size:8.2px;color:#4c6c9e;left:22.50px;transform-origin:0 50%;transform:scaleX(0.828);">추가</div>
<div class="t" style="top:525.36px;font-size:8.3px;color:#4674bd;left:60.75px;transform-origin:0 50%;transform:scaleX(0.869);">민소매원피스</div>
<div class="t" style="top:526.06px;font-size:9px;color:#6a6a6a;right:688.70px;transform-origin:100% 50%;transform:scaleX(0.910);">3,300</div>
<div class="t" style="top:526.06px;font-size:9px;color:#6a6a6a;right:638.00px;transform-origin:100% 50%;transform:scaleX(0.910);">24,400</div>
<div class="t" style="top:526.06px;font-size:9px;color:#6a6a6a;right:590.30px;transform-origin:100% 50%;transform:scaleX(0.910);">51.6</div>
<div class="t" style="top:526.06px;font-size:9px;color:#6a6a6a;right:543.30px;transform-origin:100% 50%;transform:scaleX(0.910);">134.7</div>
<div class="t" style="top:526.06px;font-size:9px;color:#6a6a6a;right:495.30px;transform-origin:100% 50%;transform:scaleX(0.910);">1.7%</div>
<div class="t" style="top:526.06px;font-size:9px;color:#6a6a6a;right:448.30px;transform-origin:100% 50%;transform:scaleX(0.910);">0.6%</div>
<div class="t" style="top:525.46px;font-size:8.3px;color:#555;left:640.00px;width:300px;text-align:center;transform-origin:50% 50%;transform:scaleX(0.875);">높음</div>
<div class="t" style="top:526.06px;font-size:9px;color:#6a6a6a;right:320.50px;transform-origin:100% 50%;transform:scaleX(0.910);">15</div>
<div class="hl" style="left:5px;top:561px;width:881px;background:rgba(222,222,222,0.18)"></div><div class="hl" style="left:5px;top:562px;width:881px;background:rgba(222,222,222,0.82)"></div>
<div class="add" style="top:545px"></div>
<div class="t" style="top:545.90px;font-size:8.2px;color:#4c6c9e;left:22.50px;transform-origin:0 50%;transform:scaleX(0.828);">추가</div>
<div class="t" style="top:545.00px;font-size:8.3px;color:#4674bd;left:60.75px;transform-origin:0 50%;transform:scaleX(0.869);">미니원피스</div>
<div class="t" style="top:545.70px;font-size:9px;color:#6a6a6a;right:688.70px;transform-origin:100% 50%;transform:scaleX(0.910);">4,490</div>
<div class="t" style="top:545.70px;font-size:9px;color:#6a6a6a;right:638.00px;transform-origin:100% 50%;transform:scaleX(0.910);">29,200</div>
<div class="t" style="top:545.70px;font-size:9px;color:#6a6a6a;right:590.30px;transform-origin:100% 50%;transform:scaleX(0.910);">112.2</div>
<div class="t" style="top:545.70px;font-size:9px;color:#6a6a6a;right:543.30px;transform-origin:100% 50%;transform:scaleX(0.910);">558.4</div>
<div class="t" style="top:545.70px;font-size:9px;color:#6a6a6a;right:495.30px;transform-origin:100% 50%;transform:scaleX(0.910);">2.72%</div>
<div class="t" style="top:545.70px;font-size:9px;color:#6a6a6a;right:448.30px;transform-origin:100% 50%;transform:scaleX(0.910);">2.06%</div>
<div class="t" style="top:545.10px;font-size:8.3px;color:#555;left:640.00px;width:300px;text-align:center;transform-origin:50% 50%;transform:scaleX(0.875);">높음</div>
<div class="t" style="top:545.70px;font-size:9px;color:#6a6a6a;right:320.50px;transform-origin:100% 50%;transform:scaleX(0.910);">15</div>
<div class="hl" style="left:5px;top:581px;width:881px;background:rgba(222,222,222,0.54)"></div><div class="hl" style="left:5px;top:582px;width:881px;background:rgba(222,222,222,0.46)"></div>
<div class="add" style="top:565px"></div>
<div class="t" style="top:565.54px;font-size:8.2px;color:#4c6c9e;left:22.50px;transform-origin:0 50%;transform:scaleX(0.828);">추가</div>
<div class="t" style="top:564.64px;font-size:8.3px;color:#4674bd;left:60.75px;transform-origin:0 50%;transform:scaleX(0.869);">플라워원피스</div>
<div class="t" style="top:565.34px;font-size:9px;color:#6a6a6a;right:688.70px;transform-origin:100% 50%;transform:scaleX(0.910);">3,310</div>
<div class="t" style="top:565.34px;font-size:9px;color:#6a6a6a;right:638.00px;transform-origin:100% 50%;transform:scaleX(0.910);">22,800</div>
<div class="t" style="top:565.34px;font-size:9px;color:#6a6a6a;right:590.30px;transform-origin:100% 50%;transform:scaleX(0.910);">32.5</div>
<div class="t" style="top:565.34px;font-size:9px;color:#6a6a6a;right:543.30px;transform-origin:100% 50%;transform:scaleX(0.910);">203</div>
<div class="t" style="top:565.34px;font-size:9px;color:#6a6a6a;right:495.30px;transform-origin:100% 50%;transform:scaleX(0.910);">1.06%</div>
<div class="t" style="top:565.34px;font-size:9px;color:#6a6a6a;right:448.30px;transform-origin:100% 50%;transform:scaleX(0.910);">0.95%</div>
<div class="t" style="top:564.74px;font-size:8.3px;color:#555;left:640.00px;width:300px;text-align:center;transform-origin:50% 50%;transform:scaleX(0.875);">높음</div>
<div class="t" style="top:565.34px;font-size:9px;color:#6a6a6a;right:320.50px;transform-origin:100% 50%;transform:scaleX(0.910);">15</div>
<div class="hl" style="left:5px;top:601px;width:881px;background:rgba(222,222,222,0.90)"></div><div class="hl" style="left:5px;top:602px;width:881px;background:rgba(222,222,222,0.10)"></div>
<div class="add" style="top:585px"></div>
<div class="t" style="top:585.18px;font-size:8.2px;color:#4c6c9e;left:22.50px;transform-origin:0 50%;transform:scaleX(0.828);">추가</div>
<div class="a" style="left:900px;top:153px;width:290px;height:367px;background:#fff;border-radius:2px"></div>
<div class="a" style="left:900px;top:153px;width:290px;height:34px;background:#3f7ed8;border-radius:2px 2px 0 0"></div>
<div class="t" style="top:163.50px;font-size:9.5px;color:#fff;font-weight:bold;left:912.75px;transform-origin:0 50%;transform:scaleX(0.892);">선택한 키워드(0/100)</div>
<div class="a" style="left:1135px;top:163.3px;width:49px;height:15.7px;border:1px solid #fff;border-radius:8px"></div>
<svg class="a" style="left:1143px;top:166.8px" width="9" height="9" viewBox="0 0 9 9"><path d="M2.6 1.9 A3.1 3.1 0 1 1 1.6 5.9" fill="none" stroke="#fff" stroke-width="1.4"/><path d="M0.4 0.8 L3.9 1.3 L1.5 4.0 Z" fill="#fff"/></svg>
<div class="t" style="top:164.30px;font-size:8.3px;color:#fff;left:1156.50px;transform-origin:0 50%;transform:scaleX(0.833);">지우기</div>
<div class="t" style="top:189.40px;font-size:8.5px;color:#aaa;left:906.00px;transform-origin:0 50%;transform:scaleX(0.861);">직접입력</div>
<div class="a" style="left:900px;top:484px;width:290px;height:36px;background:#fafafa;border-top:1px solid #dcdcdc"></div>
<div class="a" style="left:957.3px;top:490.8px;width:68.3px;height:22.7px;border:1px solid #8fb0e4;border-radius:2px;background:#fff"></div>
<svg class="a" style="left:972px;top:499px" width="6" height="6" viewBox="0 0 7 7"><path d="M3.5 0 V7 M0 3.5 H7" stroke="#6f9be0" stroke-width="1.8"/></svg>
<div class="t" style="top:495.00px;font-size:8.5px;color:#8aa8dd;left:983.00px;transform-origin:0 50%;transform:scaleX(0.833);">바로추가</div>
<div class="a" style="left:1028.3px;top:490.8px;width:101.7px;height:22.7px;background:#7ba6e4;border-radius:2px"></div>
<div class="t" style="top:495.00px;font-size:8.8px;color:#fff;font-weight:bold;left:1039.00px;transform-origin:0 50%;transform:scaleX(0.870);">월간 예상 실적 보기</div>
<svg class="a" style="left:1113.8px;top:499.2px" width="3.5" height="5.8" viewBox="0 0 4 7"><path d="M0.7 0.7 L3.2 3.5 L0.7 6.3" fill="none" stroke="#fff" stroke-width="1.3"/></svg>
<div class="a" style="left:1179px;top:525.5px;width:21px;height:21px;border-radius:50%;background:#fff;box-shadow:0 0 2px rgba(0,0,0,.12)"></div>
<svg class="a" style="left:1185.3px;top:532px" width="8" height="8" viewBox="0 0 8 8"><path d="M4 7.5 V1 M1.2 3.8 L4 1 L6.8 3.8" fill="none" stroke="#222" stroke-width="1.3"/></svg>
<div class="a" style="left:1179px;top:549.5px;width:21px;height:21px;border-radius:50%;background:#fff;box-shadow:0 0 2px rgba(0,0,0,.12)"></div>
<svg class="a" style="left:1185.3px;top:556px" width="8" height="8" viewBox="0 0 8 8"><path d="M4 0.5 V7 M1.2 4.2 L4 7 L6.8 4.2" fill="none" stroke="#222" stroke-width="1.3"/></svg>
</div></body></html>
